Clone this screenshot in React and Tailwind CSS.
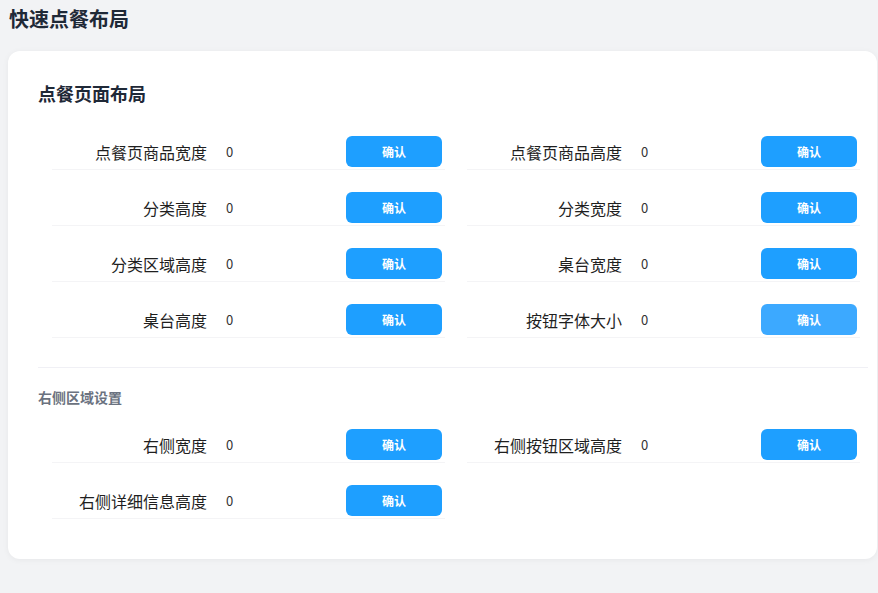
import React from 'react';

const layoutRows = [
  ['点餐页商品宽度', '点餐页商品高度'],
  ['分类高度', '分类宽度'],
  ['分类区域高度', '桌台宽度'],
  ['桌台高度', '按钮字体大小'],
];

const rightRows = [
  ['右侧宽度', '右侧按钮区域高度'],
  ['右侧详细信息高度'],
];

const SettingRow = ({ label, hover }) => (
  <div className="flex items-start w-[393px] h-[34px] border-b border-[#f4f4f6]">
    <div className="w-[155px] h-[31px] flex items-center justify-end text-[16px] text-[#1f1f1f]">{label}</div>
    <div className="ml-[19px] w-[120px] h-[31px] flex items-center text-[13px] text-[#333]">0</div>
    <button
      className={`w-[96px] h-[31px] rounded-[6px] text-white text-[12px] font-bold ${hover ? 'bg-[#3ca9ff]' : 'bg-[#1e9fff]'}`}
    >
      确认
    </button>
  </div>
);

const RowGrid = ({ rows }) => (
  <div className="flex flex-col gap-[22px] ml-[14px]">
    {rows.map((pair, i) => (
      <div key={i} className="flex gap-[22px]">
        {pair.map((label) => (
          <SettingRow key={label} label={label} hover={label === '按钮字体大小'} />
        ))}
      </div>
    ))}
  </div>
);

export default function App() {
  return (
    <div
      className="w-[878px] h-[593px] overflow-hidden bg-[#f2f3f5]"
      style={{ fontFamily: '"Noto Sans CJK SC", "Noto Sans", sans-serif' }}
    >
      <div className="pl-[9px] pt-[6px] h-[51px]">
        <h1 className="text-[20px] leading-[26px] font-bold text-[#1f2937]">快速点餐布局</h1>
      </div>

      <div className="ml-[8px] w-[869px] h-[508px] bg-white rounded-[12px] shadow-[0_1px_6px_rgba(0,0,0,0.05)] pl-[30px] pr-[9px] pt-[30px]">
        <h2 className="text-[18px] leading-[24px] font-bold text-[#1f2937]">点餐页面布局</h2>

        <div className="mt-[31px]">
          <RowGrid rows={layoutRows} />
        </div>

        <div className="mt-[29px] border-t border-[#f0f0f5]" />

        <div className="mt-[19px] text-[14px] leading-[20px] font-bold text-[#6b7280]">右侧区域设置</div>

        <div className="mt-[22px]">
          <RowGrid rows={rightRows} />
        </div>
      </div>
    </div>
  );
}
